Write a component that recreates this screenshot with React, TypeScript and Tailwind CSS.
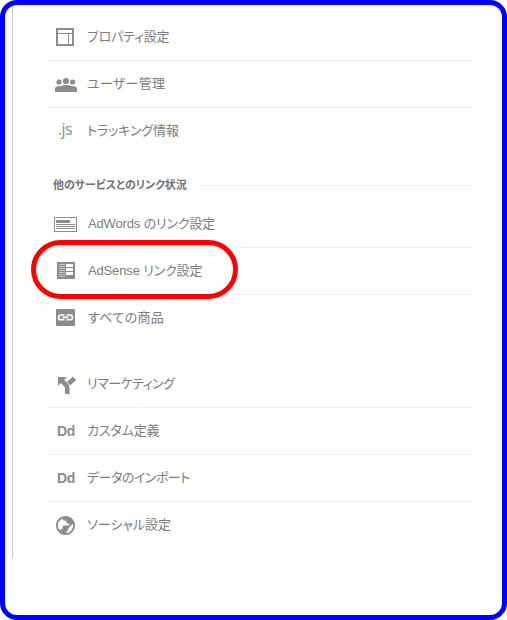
import type { ReactNode } from "react";

type Item = {
    label: ReactNode;
    icon: ReactNode;
    className?: string;
    highlighted?: boolean;
};

const Icon = ({ children }: { children: ReactNode }) => (
    <svg width="24" height="24" viewBox="0 0 24 24" fill="currentColor">
        {children}
    </svg>
);

const Dd = () => (
    <span className="text-[14px] font-bold tracking-[-0.4px] font-['Liberation_Sans',sans-serif]">
        Dd
    </span>
);

const propertyItems: Item[] = [
    {
        label: "プロパティ設定",
        className: "tracking-[-0.25px]",
        icon: (
            <Icon>
                <path d="M2 3h18v18H2zM4 5v3h14V5zM4 9v10h10V9zM15 9v10h3V9z" fillRule="evenodd" />
            </Icon>
        ),
    },
    {
        label: "ユーザー管理",
        className: "tracking-[0.3px]",
        icon: (
            <Icon>
                <circle cx="5" cy="10" r="2.6" />
                <circle cx="12" cy="9" r="3.1" />
                <circle cx="18.6" cy="10" r="2.6" />
                <path d="M1 20v-3.5C1 14.6 4.5 14 7 14c1.5-.6 3.2-.9 5-.9s3.5.3 5 .9c2.5 0 6 .6 6 2.5V20z" />
            </Icon>
        ),
    },
    {
        label: "トラッキング情報",
        className: "tracking-[-0.1px]",
        icon: (
            <span className="relative -left-px -top-0.5 text-[16px] font-medium tracking-[-0.5px] font-['Open_Sans',sans-serif]">
                .js
            </span>
        ),
    },
];

const linkItems: Item[] = [
    {
        label: "AdWords のリンク設定",
        className: "pl-px tracking-[-0.15px]",
        icon: (
            <Icon>
                <path d="M0 5h23v15H0zM1 6v13h21V6z" fillRule="evenodd" />
                <path d="M2 8h14v3H2zM2 12h19v1H2zM2 14h19v1H2zM2 16h19v1H2z" />
            </Icon>
        ),
    },
    {
        label: "AdSense リンク設定",
        className: "pl-px tracking-[-0.15px]",
        highlighted: true,
        icon: (
            <Icon>
                <path d="M3 3h18v17H3z" />
                <path
                    d="M5 5h6v1H5zM5 7h6v1H5zM5 9h6v1H5zM5 11h6v1H5zM5 13h6v1H5zM5 15h6v1H5zM5 17h6v1H5z"
                    fill="#c8c8c8"
                />
                <path d="M12 5h7v3h-7zM12 9h7v3h-7zM12 13h7v3h-7z" fill="#fff" />
            </Icon>
        ),
    },
    {
        label: "すべての商品",
        className: "pl-px tracking-[0.35px]",
        icon: (
            <Icon>
                <rect x="2" y="3" width="19" height="17" rx="1" />
                <path
                    d="M10.5 9H7a2.4 2.4 0 0 0 0 4.8h3.5M12.5 9H16a2.4 2.4 0 0 1 0 4.8h-3.5M8.5 11.4h6"
                    fill="none"
                    stroke="#fff"
                    strokeWidth="1.6"
                />
            </Icon>
        ),
    },
];

const otherItems: Item[] = [
    {
        label: "リマーケティング",
        className: "tracking-[-0.5px]",
        icon: (
            <Icon>
                <path d="M4 5h9l-9 9z" />
                <path
                    d="M7 8l4.5 4.3q1.8 1.7 1.8 4V22M14.6 11.7l5.9-5.4"
                    fill="none"
                    stroke="currentColor"
                    strokeWidth="4.6"
                />
            </Icon>
        ),
    },
    { label: "カスタム定義", className: "tracking-[-0.15px]", icon: <Dd /> },
    {
        label: "データのインポート",
        className: "tracking-[-0.5px]",
        icon: <Dd />,
    },
    {
        label: "ソーシャル設定",
        icon: (
            <Icon>
                <path
                    transform="translate(22.9 1.1) scale(-.95 .95)"
                    d="M12 2C6.48 2 2 6.48 2 12s4.48 10 10 10 10-4.48 10-10S17.52 2 12 2zm-1 17.93c-3.95-.49-7-3.85-7-7.93 0-.62.08-1.21.21-1.79L9 15v1c0 1.1.9 2 2 2v1.93zm6.9-2.54c-.26-.81-1-1.39-1.9-1.39h-1v-3c0-.55-.45-1-1-1H8v-2h2c.55 0 1-.45 1-1V7h2c1.1 0 2-.9 2-2v-.41c2.93 1.19 5 4.06 5 7.41 0 2.08-.8 3.97-2.1 5.39z"
                />
            </Icon>
        ),
    },
];

function MenuGroup({ items }: { items: Item[] }) {
    return (
        <ul>
            {items.map((item, i) => (
                <li
                    key={i}
                    className="relative flex h-[47px] items-center border-b border-[#f0f0f0] pl-1.5 last:border-transparent">
                    <span className="flex h-6 w-6 shrink-0 items-center justify-center text-[#8c8c8c]">
                        {item.icon}
                    </span>
                    <span
                        className={`ml-[9px] whitespace-nowrap pb-0.5 text-[13px] leading-none ${item.className ?? ""}`}>
                        {item.label}
                    </span>
                    {item.highlighted && (
                        <span className="absolute -left-[17px] -top-2 h-[59px] w-[207px] rounded-full border-5 border-[#ff0000]" />
                    )}
                </li>
            ))}
        </ul>
    );
}

export default function App() {
    return (
        <main className="h-[620px] w-[507px] overflow-hidden rounded-[17px] border-5 border-[#0000ff] bg-white font-['Liberation_Sans','Noto_Sans_CJK_JP',sans-serif] text-[#7c7c7c] [font-feature-settings:'palt']">
            <div className="ml-[7px] h-[553px] border-l border-[#c8c8c8] pl-[35px] pr-[30px] pt-[9px]">
                <MenuGroup items={propertyItems} />

                <div className="flex h-[46px] items-center pl-[5px] pt-[14px]">
                    <h2 className="whitespace-nowrap text-[11px] font-bold leading-none tracking-[-0.08px] text-[#707070]">
                        他のサービスとのリンク状況
                    </h2>
                    <div className="ml-2.5 h-px flex-1 bg-[#f0f0f0]" />
                </div>

                <MenuGroup items={linkItems} />
                <div className="h-[19px]" />
                <MenuGroup items={otherItems} />
            </div>
        </main>
    );
}
